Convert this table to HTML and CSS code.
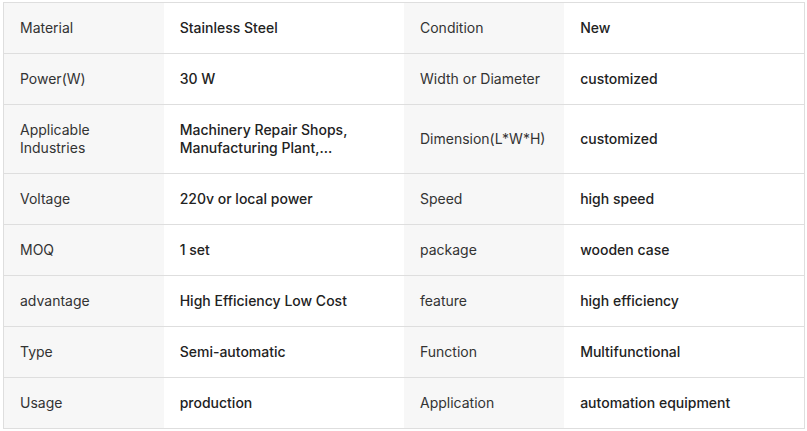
FILE: index.html
```html
<!DOCTYPE html>
<html>
<head>
<meta charset="utf-8">
<link rel="stylesheet" href="styles.css">
</head>
<body>
<table class="spec">
  <colgroup><col class="c-label"><col class="c-value"><col class="c-label"><col class="c-value"></colgroup>
  <tr><td class="label">Material</td><td class="value">Stainless Steel</td><td class="label">Condition</td><td class="value">New</td></tr>
  <tr><td class="label">Power(W)</td><td class="value">30 W</td><td class="label">Width or Diameter</td><td class="value">customized</td></tr>
  <tr><td class="label">Applicable Industries</td><td class="value"><div class="clamp">Machinery Repair Shops, Manufacturing Plant,...</div></td><td class="label">Dimension(L*W*H)</td><td class="value">customized</td></tr>
  <tr><td class="label">Voltage</td><td class="value">220v or local power</td><td class="label">Speed</td><td class="value">high speed</td></tr>
  <tr><td class="label">MOQ</td><td class="value">1 set</td><td class="label">package</td><td class="value">wooden case</td></tr>
  <tr><td class="label">advantage</td><td class="value">High Efficiency Low Cost</td><td class="label">feature</td><td class="value">high efficiency</td></tr>
  <tr><td class="label">Type</td><td class="value">Semi-automatic</td><td class="label">Function</td><td class="value">Multifunctional</td></tr>
  <tr><td class="label">Usage</td><td class="value">production</td><td class="label">Application</td><td class="value">automation equipment</td></tr>
</table>
</body>
</html>
```
FILE: styles.css
```css
html, body {
  margin: 0;
  padding: 0;
  background: #ffffff;
}
body {
  padding: 2px 0 0 3px;
  font-family: Inter, "Liberation Sans", Arial, sans-serif;
  font-size: 14px;
  line-height: 18px;
}
.spec {
  border-collapse: collapse;
  table-layout: fixed;
  width: 802px;
  border: 1px solid #dedede;
}
.c-label { width: 160px; }
.c-value { width: 240px; }
.spec td {
  padding: 16px;
  border-bottom: 1px solid #dedede;
  vertical-align: middle;
}
.spec .label {
  background: #f7f7f7;
  color: #333333;
  font-weight: 400;
}
.spec .value {
  background: #ffffff;
  color: #222222;
  font-weight: 500;
}
.clamp {
  display: -webkit-box;
  -webkit-line-clamp: 2;
  -webkit-box-orient: vertical;
  overflow: hidden;
}
```
